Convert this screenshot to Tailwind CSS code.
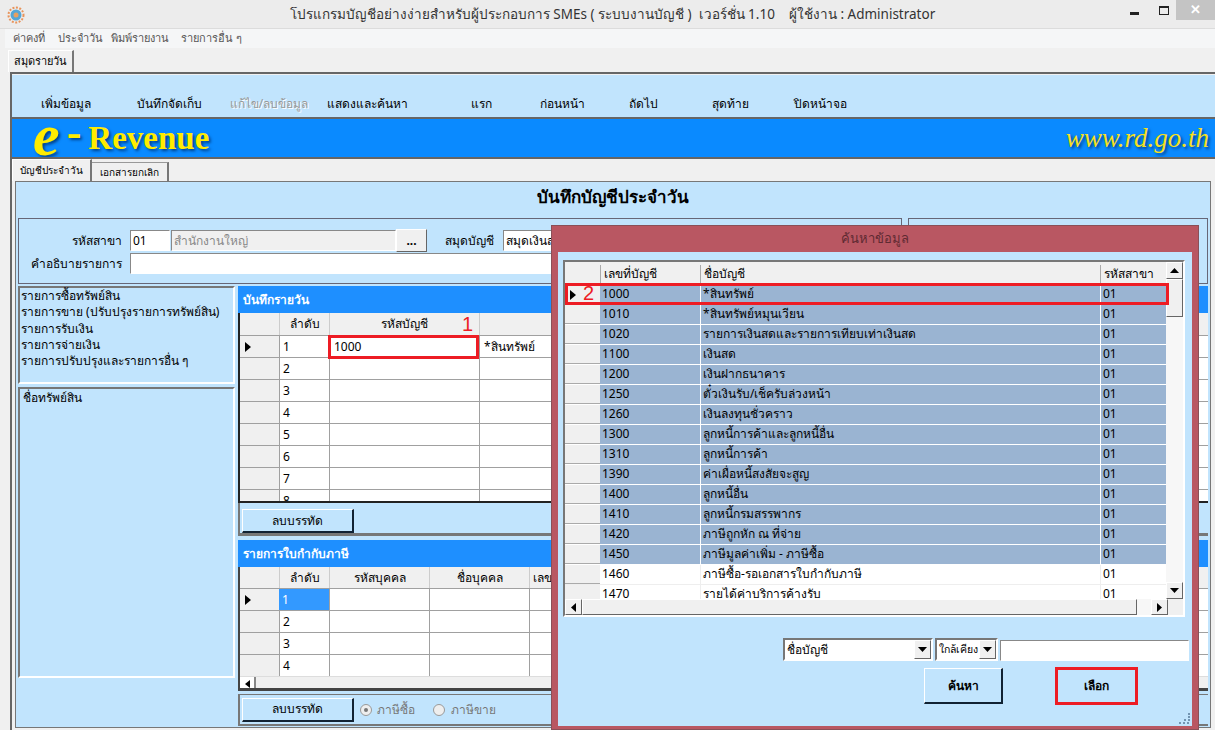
<!doctype html>
<html lang="th">
<head>
    <meta charset="UTF-8">
    <script src="https://cdn.jsdelivr.net/npm/@tailwindcss/browser@4"></script>
    <title>e-Revenue</title>
</head>
<body class="relative w-[1215px] h-[730px] overflow-hidden bg-[#f0f0f0] text-[12px] text-black font-['Noto_Sans','Liberation_Sans',sans-serif]">

<!-- title bar -->
<div class="relative flex h-[29px] items-center justify-center bg-[#ececec] border-b border-[#dcdcdc] pl-[10px]">
    <svg class="absolute left-[7px] top-[6px]" width="18" height="18" viewBox="0 0 18 18">
        <circle cx="9" cy="9" r="7.5" fill="none" stroke="#e8935a" stroke-width="2" stroke-dasharray="2 1.5"/>
        <circle cx="9" cy="9" r="5.5" fill="#55a6d6"/>
        <circle cx="9" cy="9" r="2.5" fill="#e8a060"/>
    </svg>
    <span class="text-[13.5px] text-[#333]">โปรแกรมบัญชีอย่างง่ายสำหรับผู้ประกอบการ SMEs ( ระบบงานบัญชี )&nbsp; เวอร์ชั่น 1.10 &nbsp;&nbsp; ผู้ใช้งาน : Administrator</span>
    <div class="absolute right-0 top-0 flex h-[20px] items-start">
        <div class="mt-[12px] mr-[20px] h-[3px] w-[9px] bg-[#222]"></div>
        <div class="mt-[6px] mr-[7px] h-[9px] w-[10px] border border-t-2 border-[#222]"></div>
        <div class="flex h-[20px] w-[39px] items-center justify-center bg-[#c4c4c4] text-[13px] font-bold text-white">✕</div>
    </div>
</div>

<!-- menu -->
<div class="ml-[5px] flex h-[19px] items-center bg-[#f5f6f7] text-[11px] text-[#555]">
    <span class="ml-[8px] w-[45px]">ค่าคงที่</span>
    <span class="w-[53px]">ประจำวัน</span>
    <span class="w-[70px]">พิมพ์รายงาน</span>
    <span>รายการอื่น ๆ</span>
</div>

<!-- tab strip -->
<div class="flex h-[24px] items-end pl-[8px]">
    <div class="flex h-[22px] w-[66px] items-center justify-center border-t border-l border-white border-r-2 border-r-[#777] bg-[#f0f0f0] text-[11px] font-medium">สมุดรายวัน</div>
</div>

<!-- document frame -->
<div class="ml-[10px] h-[658px] border-t-2 border-l-2 border-[#666]">
    <!-- toolbar -->
    <div class="flex h-[44px] items-end bg-[#c1e4fd] pb-[4px] mt-[1px] border-b-2 border-[#666] text-[12px]">
        <span class="ml-[2px] w-[104px] text-center">เพิ่มข้อมูล</span>
        <span class="w-[102px] text-center">บันทึกจัดเก็บ</span>
        <span class="w-[98px] text-center text-[#999] [text-shadow:1px_1px_0_#fff]">แก้ไข/ลบข้อมูล</span>
        <span class="w-[98px] text-center">แสดงและค้นหา</span>
        <span class="ml-[24px] w-[82px] text-center">แรก</span>
        <span class="w-[80px] text-center">ก่อนหน้า</span>
        <span class="w-[82px] text-center">ถัดไป</span>
        <span class="w-[92px] text-center">สุดท้าย</span>
        <span class="w-[88px] text-center">ปิดหน้าจอ</span>
    </div>
    <!-- banner -->
    <div class="flex h-[40px] items-center justify-between overflow-hidden border-b-2 border-[#666] bg-[#0a8aff] pr-[6px] pl-[21px] font-['Liberation_Serif',serif] text-[#ffec00] [text-shadow:2px_2px_3px_#00408a]">
        <div class="flex items-center">
            <span class="mt-[-6px] text-[60px] leading-[40px] font-bold italic">e</span>
            <span class="mt-[-10px] ml-[7px] text-[44px] leading-[40px] font-bold">-</span>
            <span class="ml-[7px] text-[33px] leading-[40px] font-bold">Revenue</span>
        </div>
        <span class="text-[27px] italic text-[#f6e020]">www.rd.go.th</span>
    </div>
    <!-- inner tabs -->
    <div class="flex h-[22px] items-end">
        <div class="flex h-[22px] w-[80px] items-center justify-center border-t border-l border-white border-r-2 border-r-[#777] text-[10px]">บัญชีประจำวัน</div>
        <div class="flex h-[19px] w-[77px] items-center justify-center border-t border-[#999] border-r-2 border-r-[#777] text-[10px]">เอกสารยกเลิก</div>
    </div>
    <!-- page -->
    <div class="ml-[3px] mr-[4px] h-[547px] border-[1.5px] border-[#777] bg-[#c1e4fd] px-[2px]">
        <div class="flex h-[36px] items-center justify-center pb-[4px] font-['Liberation_Serif','Noto_Sans',serif] text-[17px] font-bold">บันทึกบัญชีประจำวัน</div>

        <div class="flex gap-[6px]">
            <!-- header fields -->
            <div class="h-[66px] w-[884px] border border-[#667] pt-[10px]">
                <div class="flex h-[23px] items-center">
                    <span class="w-[103px] text-right font-medium">รหัสสาขา</span>
                    <span class="ml-[8px] flex h-[21px] w-[40px] items-center border border-white border-t-[#888] border-l-[#888] bg-white px-[2px]">01</span>
                    <span class="ml-[1px] flex h-[21px] w-[225px] items-center border border-white border-t-[#888] border-l-[#888] bg-[#f0f0f0] px-[2px] text-[#888]">สำนักงานใหญ่</span>
                    <span class="flex h-[23px] w-[31px] items-center justify-center border border-white border-r-[#666] border-b-[#666] bg-[#f0f0f0] font-bold">...</span>
                    <span class="ml-[18px] w-[52px] font-medium">สมุดบัญชี</span>
                    <span class="ml-[6px] flex h-[21px] w-[200px] items-center border border-white border-t-[#888] border-l-[#888] bg-white px-[2px]">สมุดเงินสด</span>
                </div>
                <div class="flex h-[23px] items-center">
                    <span class="w-[103px] text-right font-medium">คำอธิบายรายการ</span>
                    <span class="ml-[8px] h-[21px] w-[760px] border border-white border-t-[#888] border-l-[#888] bg-white"></span>
                </div>
            </div>
            <div class="h-[66px] flex-1 border border-[#667]"></div>
        </div>

        <div class="mt-[2px] flex gap-[3px]">
            <!-- left lists -->
            <div class="w-[217px]">
                <div class="h-[98px] border-2 border-[#777] border-r-white border-b-white pl-[1px] leading-[16.25px]">
                    <p>รายการซื้อทรัพย์สิน</p>
                    <p class="whitespace-nowrap">รายการขาย (ปรับปรุงรายการทรัพย์สิน)</p>
                    <p>รายการรับเงิน</p>
                    <p>รายการจ่ายเงิน</p>
                    <p>รายการปรับปรุงและรายการอื่น ๆ</p>
                </div>
                <div class="mt-[3px] h-[291px] border-2 border-[#777] border-r-white border-b-white pl-[3px]">ชื่อทรัพย์สิน</div>
            </div>
            <!-- right grids -->
            <div class="flex-1">
                <div class="flex h-[27px] items-center bg-[#1e8fff] pl-[5px] font-bold text-white">บันทึกรายวัน</div>
                <div class="h-[190px] overflow-hidden border-b-2 border-l-2 border-[#222] bg-white">
                    <div class="flex h-[22px] bg-[#f0f0f0] text-center leading-[22px]">
                        <span class="w-[39px]"></span>
                        <span class="w-[50px] border-l border-[#ccc]">ลำดับ</span>
                        <span class="w-[150px] border-l border-[#ccc]">รหัสบัญชี</span>
                        <span class="relative flex-1 border-l border-[#ccc]"></span>
                    </div>
                    <div class="flex h-[22px] border-t border-[#a0a0a0] items-center">
                        <span class="flex h-full w-[39px] items-center bg-[#f0f0f0] pl-[5px]"><svg width="6" height="10"><path d="M0 0L6 5L0 10Z" fill="#000"/></svg></span>
                        <span class="flex h-full w-[50px] items-center border-l border-[#a0a0a0] pl-[3px]">1</span>
                        <span class="flex h-full w-[150px] items-center border-l border-[#a0a0a0] pl-[4px]">1000</span>
                        <span class="flex h-full flex-1 items-center border-l border-[#a0a0a0] pl-[4px]">*สินทรัพย์</span>
                    </div>
                    <div class="flex h-[22px] border-t border-[#a0a0a0] items-center">
                        <span class="h-full w-[39px] bg-[#f0f0f0]"></span>
                        <span class="flex h-full w-[50px] items-center border-l border-[#a0a0a0] pl-[3px]">2</span>
                        <span class="h-full w-[150px] border-l border-[#a0a0a0]"></span>
                        <span class="h-full flex-1 border-l border-[#a0a0a0]"></span>
                    </div>
                    <div class="flex h-[22px] border-t border-[#a0a0a0] items-center">
                        <span class="h-full w-[39px] bg-[#f0f0f0]"></span>
                        <span class="flex h-full w-[50px] items-center border-l border-[#a0a0a0] pl-[3px]">3</span>
                        <span class="h-full w-[150px] border-l border-[#a0a0a0]"></span>
                        <span class="h-full flex-1 border-l border-[#a0a0a0]"></span>
                    </div>
                    <div class="flex h-[22px] border-t border-[#a0a0a0] items-center">
                        <span class="h-full w-[39px] bg-[#f0f0f0]"></span>
                        <span class="flex h-full w-[50px] items-center border-l border-[#a0a0a0] pl-[3px]">4</span>
                        <span class="h-full w-[150px] border-l border-[#a0a0a0]"></span>
                        <span class="h-full flex-1 border-l border-[#a0a0a0]"></span>
                    </div>
                    <div class="flex h-[22px] border-t border-[#a0a0a0] items-center">
                        <span class="h-full w-[39px] bg-[#f0f0f0]"></span>
                        <span class="flex h-full w-[50px] items-center border-l border-[#a0a0a0] pl-[3px]">5</span>
                        <span class="h-full w-[150px] border-l border-[#a0a0a0]"></span>
                        <span class="h-full flex-1 border-l border-[#a0a0a0]"></span>
                    </div>
                    <div class="flex h-[22px] border-t border-[#a0a0a0] items-center">
                        <span class="h-full w-[39px] bg-[#f0f0f0]"></span>
                        <span class="flex h-full w-[50px] items-center border-l border-[#a0a0a0] pl-[3px]">6</span>
                        <span class="h-full w-[150px] border-l border-[#a0a0a0]"></span>
                        <span class="h-full flex-1 border-l border-[#a0a0a0]"></span>
                    </div>
                    <div class="flex h-[22px] border-t border-[#a0a0a0] items-center">
                        <span class="h-full w-[39px] bg-[#f0f0f0]"></span>
                        <span class="flex h-full w-[50px] items-center border-l border-[#a0a0a0] pl-[3px]">7</span>
                        <span class="h-full w-[150px] border-l border-[#a0a0a0]"></span>
                        <span class="h-full flex-1 border-l border-[#a0a0a0]"></span>
                    </div>
                    <div class="flex h-[22px] border-t border-[#a0a0a0] items-center">
                        <span class="h-full w-[39px] bg-[#f0f0f0]"></span>
                        <span class="flex h-full w-[50px] items-center border-l border-[#a0a0a0] pl-[3px]">8</span>
                        <span class="h-full w-[150px] border-l border-[#a0a0a0]"></span>
                        <span class="h-full flex-1 border-l border-[#a0a0a0]"></span>
                    </div>
                </div>
                <div class="flex h-[33px] items-start border-b-[3px] border-l-2 border-[#777] pl-[2px] pt-[6px]">
                    <button class="h-[24px] w-[112px] border border-white border-r-2 border-b-2 border-r-[#123] border-b-[#123]">ลบบรรทัด</button>
                </div>

                <div class="mt-[4px] flex h-[27px] items-center bg-[#1e8fff] pl-[5px] font-bold text-white">รายการใบกำกับภาษี</div>
                <div class="h-[124px] overflow-hidden border-b-[3px] border-l-2 border-[#444] bg-white">
                    <div class="flex h-[21px] bg-[#f0f0f0] text-center leading-[21px]">
                        <span class="w-[39px]"></span>
                        <span class="w-[50px] border-l border-[#ccc]">ลำดับ</span>
                        <span class="w-[100px] border-l border-[#ccc]">รหัสบุคคล</span>
                        <span class="w-[100px] border-l border-[#ccc]">ชื่อบุคคล</span>
                        <span class="flex-1 border-l border-[#ccc] pl-[3px] text-left">เลขที่ใบกำกับ</span>
                    </div>
                    <div class="flex h-[22px] border-t border-[#a0a0a0]">
                        <span class="flex h-full w-[39px] items-center bg-[#f0f0f0] pl-[5px]"><svg width="6" height="10"><path d="M0 0L6 5L0 10Z" fill="#000"/></svg></span>
                        <span class="flex h-full w-[50px] items-center bg-[#3399ff] pl-[3px] text-white">1</span>
                        <span class="h-full w-[100px] border-l border-[#a0a0a0]"></span>
                        <span class="h-full w-[100px] border-l border-[#a0a0a0]"></span>
                        <span class="h-full flex-1 border-l border-[#a0a0a0]"></span>
                    </div>
                    <div class="flex h-[22px] border-t border-[#a0a0a0]">
                        <span class="h-full w-[39px] bg-[#f0f0f0]"></span>
                        <span class="flex h-full w-[50px] items-center border-l border-[#a0a0a0] pl-[3px]">2</span>
                        <span class="h-full w-[100px] border-l border-[#a0a0a0]"></span>
                        <span class="h-full w-[100px] border-l border-[#a0a0a0]"></span>
                        <span class="h-full flex-1 border-l border-[#a0a0a0]"></span>
                    </div>
                    <div class="flex h-[22px] border-t border-[#a0a0a0]">
                        <span class="h-full w-[39px] bg-[#f0f0f0]"></span>
                        <span class="flex h-full w-[50px] items-center border-l border-[#a0a0a0] pl-[3px]">3</span>
                        <span class="h-full w-[100px] border-l border-[#a0a0a0]"></span>
                        <span class="h-full w-[100px] border-l border-[#a0a0a0]"></span>
                        <span class="h-full flex-1 border-l border-[#a0a0a0]"></span>
                    </div>
                    <div class="flex h-[22px] border-t border-[#a0a0a0]">
                        <span class="h-full w-[39px] bg-[#f0f0f0]"></span>
                        <span class="flex h-full w-[50px] items-center border-l border-[#a0a0a0] pl-[3px]">4</span>
                        <span class="h-full w-[100px] border-l border-[#a0a0a0]"></span>
                        <span class="h-full w-[100px] border-l border-[#a0a0a0]"></span>
                        <span class="h-full flex-1 border-l border-[#a0a0a0]"></span>
                    </div>
                    <div class="flex h-[15px] border-t border-[#ddd] bg-[#f0f0f0]">
                        <span class="flex h-full w-[16px] items-center justify-center border-r-2 border-[#888] bg-white"><svg width="5" height="8"><path d="M5 0L0 4L5 8Z" fill="#000"/></svg></span>
                    </div>
                </div>
                <div class="mt-[3px] flex h-[32px] items-center border-b-2 border-l-2 border-t border-[#777] pl-[2px] text-[#777]">
                    <button class="h-[24px] w-[112px] border border-white border-r-2 border-b-2 border-r-[#123] border-b-[#123] text-black">ลบบรรทัด</button>
                    <span class="ml-[6px] flex h-[12px] w-[12px] items-center justify-center rounded-full border border-[#999] bg-[#eee]"><span class="h-[4px] w-[4px] rounded-full bg-[#777]"></span></span>
                    <span class="ml-[5px] w-[56px]">ภาษีซื้อ</span>
                    <span class="h-[12px] w-[12px] rounded-full border border-[#999] bg-[#eee]"></span>
                    <span class="ml-[6px]">ภาษีขาย</span>
                </div>
            </div>
        </div>
    </div>
</div>

<!-- annotations over the grid -->
<span class="absolute left-[462px] top-[313px] text-[20px] leading-[22px] text-[#ed1c24] font-['Liberation_Sans',sans-serif]">1</span>
<div class="absolute left-[328px] top-[335px] h-[24px] w-[151px] border-[3px] border-[#ed1c24]"></div>

<!-- search dialog -->
<div class="absolute left-[551px] top-[225px] flex h-[505px] w-[648px] flex-col border border-[#8a5058] bg-[#b95762] px-[6px]">
    <div class="flex h-[26px] shrink-0 items-center justify-center text-[13px] text-[#5f2a32]">ค้นหาข้อมูล</div>
    <div class="relative h-[474px] shrink-0 bg-[#c1e4fd]">
        <!-- list grid -->
        <div class="absolute left-[5px] top-[8px] h-[357px] w-[622px] border-t-2 border-l-2 border-[#777] border-r-2 border-b-2 border-r-white border-b-white bg-[#f0f0f0]">
            <div class="h-[337px] w-[603px] overflow-hidden bg-white">
                <div class="flex h-[23px] items-center bg-[#f0f0f0]">
                    <span class="w-[35px]"></span>
                    <span class="w-[100px] border-l border-[#aaa] pl-[3px]">เลขที่บัญชี</span>
                    <span class="w-[400px] border-l border-[#aaa] pl-[3px]">ชื่อบัญชี</span>
                    <span class="flex-1 border-l border-[#aaa] pl-[3px]">รหัสสาขา</span>
                </div>
                <div class="flex h-[20px] border-b border-white"><span class="flex w-[35px] items-center bg-[#f0f0f0] pl-[5px]"><svg width="6" height="10"><path d="M0 0L6 5L0 10Z" fill="#000"/></svg></span><span class="w-[100px] bg-[#9ab4d2] pl-[2px]">1000</span><span class="w-[400px] border-l border-white bg-[#9ab4d2] pl-[2px]">*สินทรัพย์</span><span class="flex-1 border-l border-white bg-[#9ab4d2] pl-[2px]">01</span></div>
                <div class="flex h-[20px] border-b border-white"><span class="w-[35px] border-b border-[#aaa] bg-[#f0f0f0]"></span><span class="w-[100px] bg-[#9ab4d2] pl-[2px]">1010</span><span class="w-[400px] border-l border-white bg-[#9ab4d2] pl-[2px]">*สินทรัพย์หมุนเวียน</span><span class="flex-1 border-l border-white bg-[#9ab4d2] pl-[2px]">01</span></div>
                <div class="flex h-[20px] border-b border-white"><span class="w-[35px] border-b border-[#aaa] bg-[#f0f0f0]"></span><span class="w-[100px] bg-[#9ab4d2] pl-[2px]">1020</span><span class="w-[400px] border-l border-white bg-[#9ab4d2] pl-[2px]">รายการเงินสดและรายการเทียบเท่าเงินสด</span><span class="flex-1 border-l border-white bg-[#9ab4d2] pl-[2px]">01</span></div>
                <div class="flex h-[20px] border-b border-white"><span class="w-[35px] border-b border-[#aaa] bg-[#f0f0f0]"></span><span class="w-[100px] bg-[#9ab4d2] pl-[2px]">1100</span><span class="w-[400px] border-l border-white bg-[#9ab4d2] pl-[2px]">เงินสด</span><span class="flex-1 border-l border-white bg-[#9ab4d2] pl-[2px]">01</span></div>
                <div class="flex h-[20px] border-b border-white"><span class="w-[35px] border-b border-[#aaa] bg-[#f0f0f0]"></span><span class="w-[100px] bg-[#9ab4d2] pl-[2px]">1200</span><span class="w-[400px] border-l border-white bg-[#9ab4d2] pl-[2px]">เงินฝากธนาคาร</span><span class="flex-1 border-l border-white bg-[#9ab4d2] pl-[2px]">01</span></div>
                <div class="flex h-[20px] border-b border-white"><span class="w-[35px] border-b border-[#aaa] bg-[#f0f0f0]"></span><span class="w-[100px] bg-[#9ab4d2] pl-[2px]">1250</span><span class="w-[400px] border-l border-white bg-[#9ab4d2] pl-[2px]">ตั๋วเงินรับ/เช็ครับล่วงหน้า</span><span class="flex-1 border-l border-white bg-[#9ab4d2] pl-[2px]">01</span></div>
                <div class="flex h-[20px] border-b border-white"><span class="w-[35px] border-b border-[#aaa] bg-[#f0f0f0]"></span><span class="w-[100px] bg-[#9ab4d2] pl-[2px]">1260</span><span class="w-[400px] border-l border-white bg-[#9ab4d2] pl-[2px]">เงินลงทุนชั่วคราว</span><span class="flex-1 border-l border-white bg-[#9ab4d2] pl-[2px]">01</span></div>
                <div class="flex h-[20px] border-b border-white"><span class="w-[35px] border-b border-[#aaa] bg-[#f0f0f0]"></span><span class="w-[100px] bg-[#9ab4d2] pl-[2px]">1300</span><span class="w-[400px] border-l border-white bg-[#9ab4d2] pl-[2px]">ลูกหนี้การค้าและลูกหนี้อื่น</span><span class="flex-1 border-l border-white bg-[#9ab4d2] pl-[2px]">01</span></div>
                <div class="flex h-[20px] border-b border-white"><span class="w-[35px] border-b border-[#aaa] bg-[#f0f0f0]"></span><span class="w-[100px] bg-[#9ab4d2] pl-[2px]">1310</span><span class="w-[400px] border-l border-white bg-[#9ab4d2] pl-[2px]">ลูกหนี้การค้า</span><span class="flex-1 border-l border-white bg-[#9ab4d2] pl-[2px]">01</span></div>
                <div class="flex h-[20px] border-b border-white"><span class="w-[35px] border-b border-[#aaa] bg-[#f0f0f0]"></span><span class="w-[100px] bg-[#9ab4d2] pl-[2px]">1390</span><span class="w-[400px] border-l border-white bg-[#9ab4d2] pl-[2px]">ค่าเผื่อหนี้สงสัยจะสูญ</span><span class="flex-1 border-l border-white bg-[#9ab4d2] pl-[2px]">01</span></div>
                <div class="flex h-[20px] border-b border-white"><span class="w-[35px] border-b border-[#aaa] bg-[#f0f0f0]"></span><span class="w-[100px] bg-[#9ab4d2] pl-[2px]">1400</span><span class="w-[400px] border-l border-white bg-[#9ab4d2] pl-[2px]">ลูกหนี้อื่น</span><span class="flex-1 border-l border-white bg-[#9ab4d2] pl-[2px]">01</span></div>
                <div class="flex h-[20px] border-b border-white"><span class="w-[35px] border-b border-[#aaa] bg-[#f0f0f0]"></span><span class="w-[100px] bg-[#9ab4d2] pl-[2px]">1410</span><span class="w-[400px] border-l border-white bg-[#9ab4d2] pl-[2px]">ลูกหนี้กรมสรรพากร</span><span class="flex-1 border-l border-white bg-[#9ab4d2] pl-[2px]">01</span></div>
                <div class="flex h-[20px] border-b border-white"><span class="w-[35px] border-b border-[#aaa] bg-[#f0f0f0]"></span><span class="w-[100px] bg-[#9ab4d2] pl-[2px]">1420</span><span class="w-[400px] border-l border-white bg-[#9ab4d2] pl-[2px]">ภาษีถูกหัก ณ ที่จ่าย</span><span class="flex-1 border-l border-white bg-[#9ab4d2] pl-[2px]">01</span></div>
                <div class="flex h-[20px] border-b border-white"><span class="w-[35px] border-b border-[#aaa] bg-[#f0f0f0]"></span><span class="w-[100px] bg-[#9ab4d2] pl-[2px]">1450</span><span class="w-[400px] border-l border-white bg-[#9ab4d2] pl-[2px]">ภาษีมูลค่าเพิ่ม - ภาษีซื้อ</span><span class="flex-1 border-l border-white bg-[#9ab4d2] pl-[2px]">01</span></div>
                <div class="flex h-[20px] border-b border-[#eee]"><span class="w-[35px] border-b border-[#aaa] bg-[#f0f0f0]"></span><span class="w-[100px] pl-[2px]">1460</span><span class="w-[400px] border-l border-[#eee] pl-[2px]">ภาษีซื้อ-รอเอกสารใบกำกับภาษี</span><span class="flex-1 border-l border-[#eee] pl-[2px]">01</span></div>
                <div class="flex h-[20px]"><span class="w-[35px] bg-[#f0f0f0]"></span><span class="w-[100px] pl-[2px]">1470</span><span class="w-[400px] border-l border-[#eee] pl-[2px]">รายได้ค่าบริการค้างรับ</span><span class="flex-1 border-l border-[#eee] pl-[2px]">01</span></div>
            </div>
            <!-- vertical scrollbar -->
            <div class="absolute right-0 top-0 flex h-[337px] w-[17px] flex-col bg-[#f7f7f7]">
                <div class="flex h-[17px] items-center justify-center border border-white border-r-[#666] border-b-[#666] bg-[#f0f0f0]"><svg width="9" height="5"><path d="M0 5L4.5 0L9 5Z" fill="#000"/></svg></div>
                <div class="h-[38px] border border-white border-r-[#666] border-b-[#666] bg-[#f0f0f0]"></div>
                <div class="flex-1"></div>
                <div class="flex h-[17px] items-center justify-center border border-white border-r-[#666] border-b-[#666] bg-[#f0f0f0]"><svg width="9" height="5"><path d="M0 0L4.5 5L9 0Z" fill="#000"/></svg></div>
            </div>
            <!-- horizontal scrollbar -->
            <div class="absolute left-0 top-[337px] flex h-[16px] w-[603px] bg-[#f7f7f7]">
                <div class="flex w-[17px] items-center justify-center border border-white border-r-[#666] border-b-[#666] bg-[#f0f0f0]"><svg width="5" height="9"><path d="M5 0L0 4.5L5 9Z" fill="#000"/></svg></div>
                <div class="w-[555px] border border-white border-r-[#666] border-b-[#666] bg-[#f0f0f0]"></div>
                <div class="flex-1"></div>
                <div class="flex w-[17px] items-center justify-center border border-white border-r-[#666] border-b-[#666] bg-[#f0f0f0]"><svg width="5" height="9"><path d="M0 0L5 4.5L0 9Z" fill="#000"/></svg></div>
            </div>
        </div>
        <!-- annotation: selected row -->
        <div class="absolute left-[7px] top-[31px] h-[22px] w-[604px] border-[3px] border-[#ed1c24]"></div>
        <span class="absolute left-[25px] top-[31px] text-[20px] leading-[20px] text-[#ed1c24] font-['Liberation_Sans',sans-serif]">2</span>

        <!-- search controls -->
        <div class="absolute left-[225px] top-[387px] flex h-[22px] w-[408px] items-end gap-[2px]">
            <div class="flex h-[23px] w-[150px] items-center justify-between border-2 border-[#777] border-r-white border-b-white bg-white pl-[2px]">ชื่อบัญชี<span class="flex h-full w-[17px] items-center justify-center border border-white border-r-[#666] border-b-[#666] bg-[#f0f0f0]"><svg width="9" height="5"><path d="M0 0L4.5 5L9 0Z" fill="#000"/></svg></span></div>
            <div class="flex h-[23px] w-[63px] items-center justify-between overflow-hidden whitespace-nowrap border-2 border-[#777] border-r-white border-b-white bg-white pl-[2px] text-[10.5px]">ใกล้เคียง<span class="flex h-full w-[17px] shrink-0 items-center justify-center border border-white border-r-[#666] border-b-[#666] bg-[#f0f0f0]"><svg width="9" height="5"><path d="M0 0L4.5 5L9 0Z" fill="#000"/></svg></span></div>
            <div class="h-[21px] w-[189px] border border-white border-t-[#888] border-l-[#888] bg-white"></div>
        </div>
        <div class="absolute left-[366px] top-[416px] flex h-[36px] w-[79px] items-center justify-center border border-white border-r-2 border-b-2 border-r-[#123] border-b-[#123] font-bold">ค้นหา</div>
        <div class="absolute left-[497px] top-[415px] flex h-[38px] w-[83px] items-center justify-center border-[3px] border-[#ed1c24] font-bold">เลือก</div>
        <svg class="absolute right-[1px] bottom-[2px]" width="13" height="12"><path d="M1 11h2M5 11h2M9 11h2M6 8h2M10 8h2M10 5h2M11 1v2" stroke="#246" stroke-width="1"/></svg>
    </div>
</div>
</body>
</html>
